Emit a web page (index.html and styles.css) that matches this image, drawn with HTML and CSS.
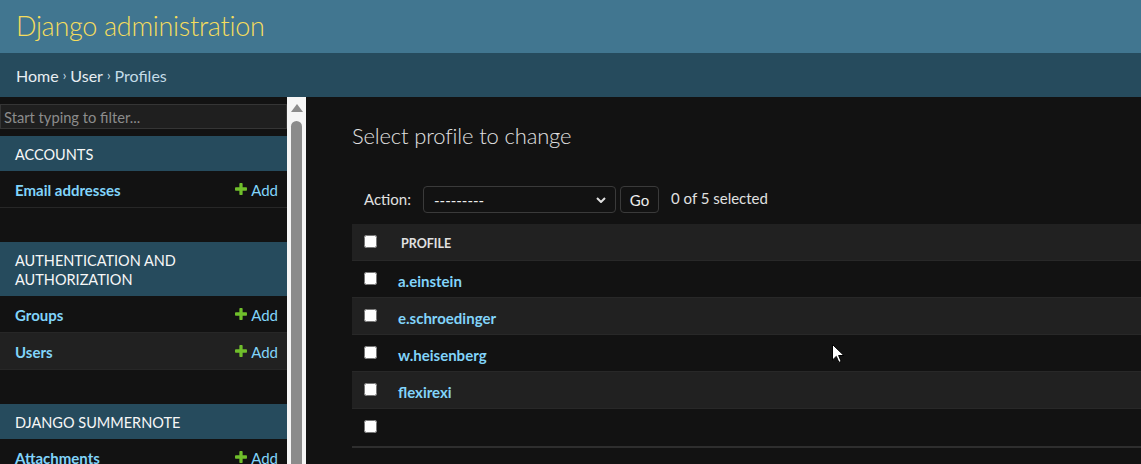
FILE: index.html
```html
<!DOCTYPE html>
<html lang="en">
<head>
<meta charset="utf-8">
<title>Select profile to change | Django site admin</title>
<link rel="stylesheet" href="styles.css">
</head>
<body>
<header class="site-header">
  <div class="branding">Django administration</div>
</header>
<nav class="breadcrumbs">
  <a href="#">Home</a><span class="sep">›</span><a href="#">User</a><span class="sep">›</span><span>Profiles</span>
</nav>
<div class="main">
  <aside class="sidebar">
    <input class="nav-filter" type="search" placeholder="Start typing to filter...">
    <section class="module">
      <div class="caption">Accounts</div>
      <div class="model-row">
        <a class="model" href="#">Email addresses</a>
        <a class="addlink" href="#"><svg class="plus" viewBox="190 186 1412 1412"><path d="M1600 796v192q0 40-28 68t-68 28h-416v416q0 40-28 68t-68 28h-192q-40 0-68-28t-28-68v-416h-416q-40 0-68-28t-28-68v-192q0-40 28-68t68-28h416v-416q0-40 28-68t68-28h192q40 0 68 28t28 68v416h416q40 0 68 28t28 68z"/></svg>Add</a>
      </div>
    </section>
    <section class="module">
      <div class="caption">Authentication and Authorization</div>
      <div class="model-row">
        <a class="model" href="#">Groups</a>
        <a class="addlink" href="#"><svg class="plus" viewBox="190 186 1412 1412"><path d="M1600 796v192q0 40-28 68t-68 28h-416v416q0 40-28 68t-68 28h-192q-40 0-68-28t-28-68v-416h-416q-40 0-68-28t-28-68v-192q0-40 28-68t68-28h416v-416q0-40 28-68t68-28h192q40 0 68 28t28 68v416h416q40 0 68 28t28 68z"/></svg>Add</a>
      </div>
      <div class="model-row highlighted">
        <a class="model" href="#">Users</a>
        <a class="addlink" href="#"><svg class="plus" viewBox="190 186 1412 1412"><path d="M1600 796v192q0 40-28 68t-68 28h-416v416q0 40-28 68t-68 28h-192q-40 0-68-28t-28-68v-416h-416q-40 0-68-28t-28-68v-192q0-40 28-68t68-28h416v-416q0-40 28-68t68-28h192q40 0 68 28t28 68v416h416q40 0 68 28t28 68z"/></svg>Add</a>
      </div>
    </section>
    <section class="module">
      <div class="caption">Django Summernote</div>
      <div class="model-row">
        <a class="model" href="#">Attachments</a>
        <a class="addlink" href="#"><svg class="plus" viewBox="190 186 1412 1412"><path d="M1600 796v192q0 40-28 68t-68 28h-416v416q0 40-28 68t-68 28h-192q-40 0-68-28t-28-68v-416h-416q-40 0-68-28t-28-68v-192q0-40 28-68t68-28h416v-416q0-40 28-68t68-28h192q40 0 68 28t28 68v416h416q40 0 68 28t28 68z"/></svg>Add</a>
      </div>
    </section>
  </aside>
  <div class="scrollbar" aria-hidden="true">
    <span class="scroll-arrow"></span>
    <span class="scroll-thumb"></span>
  </div>
  <main class="content">
    <h1>Select profile to change</h1>
    <div class="actions">
      <label class="action-label">Action:</label>
      <div class="select">
        <span class="select-value">---------</span>
        <svg class="chevron" viewBox="0 0 10 6"><path d="M1 1l4 4 4-4"/></svg>
      </div>
      <button class="go" type="button">Go</button>
      <span class="counter">0 of 5 selected</span>
    </div>
    <div class="results">
      <div class="row head">
        <div class="cb"><input type="checkbox"></div>
        <div class="col-name">Profile</div>
      </div>
      <div class="row">
        <div class="cb"><input type="checkbox"></div>
        <div class="col-link"><a href="#">a.einstein</a></div>
      </div>
      <div class="row alt">
        <div class="cb"><input type="checkbox"></div>
        <div class="col-link"><a href="#">e.schroedinger</a></div>
      </div>
      <div class="row">
        <div class="cb"><input type="checkbox"></div>
        <div class="col-link"><a href="#">w.heisenberg</a></div>
      </div>
      <div class="row alt">
        <div class="cb"><input type="checkbox"></div>
        <div class="col-link"><a href="#">flexirexi</a></div>
      </div>
      <div class="row last">
        <div class="cb"><input type="checkbox"></div>
        <div class="col-link"></div>
      </div>
    </div>
  </main>
</div>
<svg class="cursor" viewBox="0 0 12 19" aria-hidden="true"><path d="M0.5 0.5v15.5l3.8-3.6 2.6 6 2.3-1-2.6-5.9h5.3z"/></svg>
</body>
</html>
```

FILE: styles.css
```css
* { box-sizing: border-box; }
html, body { margin: 0; height: 100%; }
body {
  background: #121212;
  color: #eeeeee;
  font-family: "Lato", "Open Sans", "DejaVu Sans", sans-serif;
  font-size: 15px;
  overflow: hidden;
}
a { color: #81d4fa; text-decoration: none; }

.site-header {
  height: 53px;
  background: #417690;
  padding: 0 16px 2px;
  display: flex;
  align-items: center;
}
.branding {
  font-size: 27px;
  letter-spacing: -0.3px;
  font-weight: 300;
  color: #f5dd5d;
}

.breadcrumbs {
  height: 44px;
  background: #264b5d;
  color: #c4dce8;
  padding: 0 16px;
  display: flex;
  align-items: center;
  font-size: 16px;
}
.breadcrumbs a { color: #e8eef2; }
.breadcrumbs .sep { margin: 0 4px; font-size: 13px; }

.main {
  display: flex;
  height: calc(100% - 97px);
}

.sidebar {
  width: 287px;
  flex: none;
  padding-top: 7px;
  overflow: hidden;
}
.nav-filter {
  display: block;
  width: 100%;
  height: 25px;
  margin: 0 0 7px;
  padding: 0 3px;
  border: 1px solid #353535;
  background: #1f1f1f;
  color: #eee;
  font-family: inherit;
  font-size: 14.7px;
  outline: none;
}
.nav-filter::placeholder { color: #8c8c8c; }

.module { margin-bottom: 34px; }
.caption {
  background: #264b5d;
  color: #f7f7f7;
  padding: 9px 15px 7px;
  font-size: 14.5px;
  line-height: 19px;
  text-transform: uppercase;
}
.model-row {
  height: 37px;
  display: flex;
  align-items: center;
  justify-content: space-between;
  padding: 2px 9px 0 15px;
  border-bottom: 1px solid #272727;
}
.model-row.highlighted { background: #212121; }
.model { font-weight: 700; font-size: 15px; }
.addlink { display: flex; align-items: center; font-size: 15px; }
.plus { width: 12px; height: 12px; margin-right: 4px; margin-top: -2px; fill: #70bf2b; }

.scrollbar {
  width: 19px;
  flex: none;
  background: #f5f5f5;
  display: flex;
  flex-direction: column;
  align-items: center;
  padding-top: 7px;
}
.scroll-arrow {
  width: 0;
  height: 0;
  border-left: 6.5px solid transparent;
  border-right: 6.5px solid transparent;
  border-bottom: 8px solid #8b8b8b;
}
.scroll-thumb {
  margin-top: 9px;
  width: 11px;
  flex: 1;
  background: #8b8b8b;
  border-radius: 6px 6px 0 0;
}

.content {
  flex: 1;
  min-width: 0;
  padding: 25px 0 0 46px;
}
h1 {
  margin: 0 0 36px;
  font-size: 22px;
  letter-spacing: -0.15px;
  line-height: 28px;
  font-weight: 300;
  color: #e0e0e0;
}

.actions {
  display: flex;
  align-items: center;
  height: 27px;
  padding-left: 12px;
  margin-bottom: 11px;
  color: #e0e0e0;
}
.action-label { width: 59px; margin-top: -1px; }
.select {
  width: 193px;
  height: 27px;
  border: 1px solid #3a3a3a;
  border-radius: 4px;
  display: flex;
  align-items: center;
  justify-content: space-between;
  padding: 0 9px 0 10px;
}
.select-value { color: #eee; }
.chevron { width: 10px; height: 6px; fill: none; stroke: #e0e0e0; stroke-width: 2; }
.go {
  margin-left: 4px;
  width: 39px;
  height: 27px;
  background: #121212;
  color: #eee;
  border: 1px solid #3a3a3a;
  border-radius: 4px;
  font-family: inherit;
  font-size: 15px;
  padding: 0;
}
.counter { margin-left: 12px; margin-top: -3px; }

.results { width: 100%; }
.row {
  display: flex;
  align-items: center;
  height: 37px;
  border-bottom: 1px solid #282828;
}
.row.head, .row.alt { background: #212121; }
.row.last { border-bottom: 2px solid #2e2e2e; height: 39px; }
.cb { width: 38px; padding-left: 12px; display: flex; margin-top: -2px; }
.cb input { margin: 0; width: 13px; height: 13px; }
.col-name {
  padding-left: 11px;
  padding-top: 2px;
  font-size: 12.5px;
  font-weight: 700;
  text-transform: uppercase;
  color: #e0e0e0;
}
.col-link { padding-left: 8px; padding-top: 3px; font-size: 15px; font-weight: 700; }

.cursor {
  position: absolute;
  left: 832px;
  top: 344px;
  width: 12px;
  height: 19px;
  fill: #ffffff;
  stroke: #000000;
  stroke-width: 1;
}
```
